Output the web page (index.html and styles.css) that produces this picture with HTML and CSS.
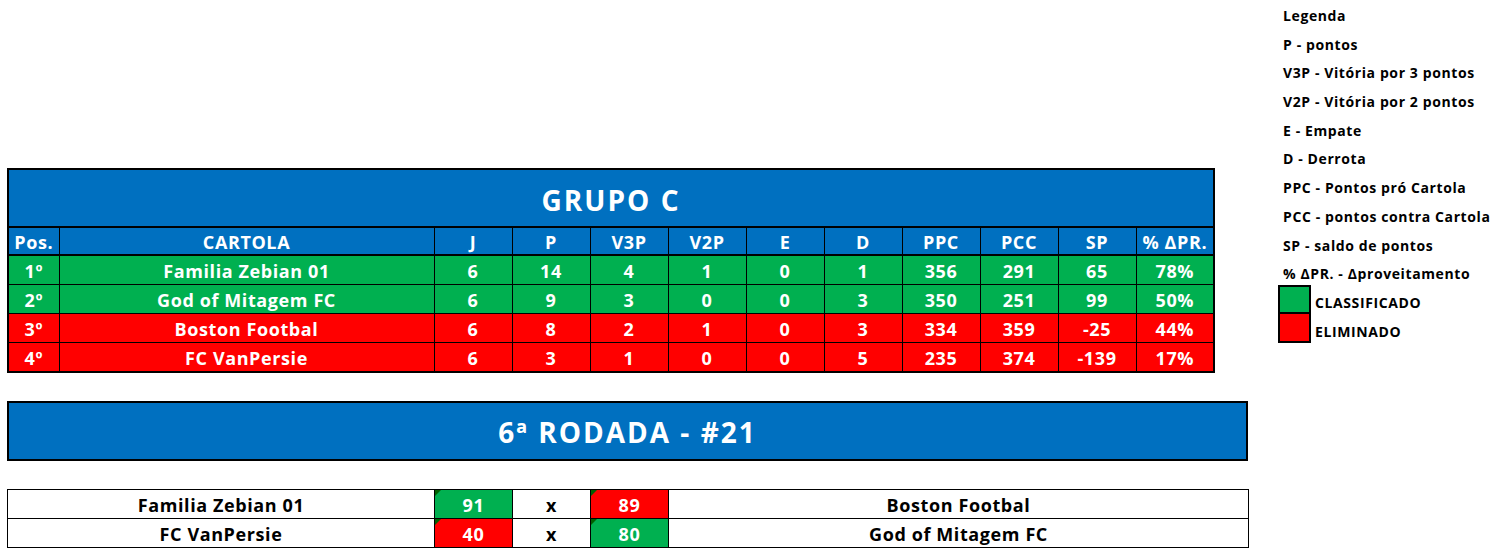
FILE: index.html
```html
<!DOCTYPE html>
<html lang="pt">
<head>
<meta charset="utf-8">
<title>Grupo C</title>
<link rel="stylesheet" href="styles.css">
</head>
<body>
<div class="page">
  <main class="main">
    <table class="standings">
      <colgroup>
        <col class="c-pos"><col class="c-name">
        <col class="c-num"><col class="c-num"><col class="c-num"><col class="c-num"><col class="c-num">
        <col class="c-num"><col class="c-num"><col class="c-num"><col class="c-num"><col class="c-num">
      </colgroup>
      <thead>
        <tr><th colspan="12" class="title">GRUPO C</th></tr>
        <tr class="head">
          <th>Pos.</th><th>CARTOLA</th><th>J</th><th>P</th><th>V3P</th><th>V2P</th><th>E</th><th>D</th><th>PPC</th><th>PCC</th><th>SP</th><th>% ΔPR.</th>
        </tr>
      </thead>
      <tbody>
        <tr class="win"><td>1º</td><td>Familia Zebian 01</td><td>6</td><td>14</td><td>4</td><td>1</td><td>0</td><td>1</td><td>356</td><td>291</td><td>65</td><td>78%</td></tr>
        <tr class="win"><td>2º</td><td>God of Mitagem FC</td><td>6</td><td>9</td><td>3</td><td>0</td><td>0</td><td>3</td><td>350</td><td>251</td><td>99</td><td>50%</td></tr>
        <tr class="lose"><td>3º</td><td>Boston Footbal</td><td>6</td><td>8</td><td>2</td><td>1</td><td>0</td><td>3</td><td>334</td><td>359</td><td>-25</td><td>44%</td></tr>
        <tr class="lose"><td>4º</td><td>FC VanPersie</td><td>6</td><td>3</td><td>1</td><td>0</td><td>0</td><td>5</td><td>235</td><td>374</td><td>-139</td><td>17%</td></tr>
      </tbody>
    </table>

    <div class="round">6ª RODADA - #21</div>

    <table class="matches">
      <colgroup>
        <col class="m-team1"><col class="m-score"><col class="m-x"><col class="m-score"><col class="m-team2">
      </colgroup>
      <tbody>
        <tr><td>Familia Zebian 01</td><td class="score win">91</td><td>x</td><td class="score lose">89</td><td>Boston Footbal</td></tr>
        <tr><td>FC VanPersie</td><td class="score lose">40</td><td>x</td><td class="score win">80</td><td>God of Mitagem FC</td></tr>
      </tbody>
    </table>
  </main>

  <aside class="legend">
    <div class="legend-row">Legenda</div>
    <div class="legend-row">P - pontos</div>
    <div class="legend-row">V3P - Vitória por 3 pontos</div>
    <div class="legend-row">V2P - Vitória por 2 pontos</div>
    <div class="legend-row">E - Empate</div>
    <div class="legend-row">D - Derrota</div>
    <div class="legend-row">PPC - Pontos pró Cartola</div>
    <div class="legend-row">PCC - pontos contra Cartola</div>
    <div class="legend-row">SP - saldo de pontos</div>
    <div class="legend-row">% ΔPR. - Δproveitamento</div>
    <div class="legend-row swatch-row"><span class="swatch swatch-win"></span><span class="swatch-label">CLASSIFICADO</span></div>
    <div class="legend-row swatch-row"><span class="swatch swatch-lose"></span><span class="swatch-label">ELIMINADO</span></div>
  </aside>
</div>
</body>
</html>
```

FILE: styles.css
```css
html, body {
  margin: 0;
  padding: 0;
  background: #ffffff;
}

body {
  font-family: "Open Sans", Lato, "DejaVu Sans", sans-serif;
  font-weight: 700;
  color: #000;
}

.page {
  display: flex;
  align-items: flex-start;
}

.main {
  width: 1241px;
  padding: 168px 0 0 7px;
  display: flex;
  flex-direction: column;
}

/* ---------- standings ---------- */
.standings {
  border-collapse: collapse;
  table-layout: fixed;
  width: 1208px;
  border: 2px solid #000;
  color: #fff;
  font-size: 18px;
  letter-spacing: 0.6px;
}

.c-pos { width: 51px; }
.c-name { width: 375px; }
.c-num { width: 78px; }

.standings th,
.standings td {
  border: 1px solid #000;
  text-align: center;
  padding: 3px 0 0 0;
  height: 25px;
  line-height: 25px;
  white-space: nowrap;
  overflow: hidden;
}

.standings .title {
  background: #0070c0;
  height: 52px;
  padding-top: 4px;
  line-height: 52px;
  font-size: 28px;
  letter-spacing: 2px;
  border-bottom: 2px solid #000;
}

.standings .head th {
  background: #0070c0;
  border-bottom: 2px solid #000;
  font-weight: 700;
  height: 23px;
  line-height: 23px;
}

.standings .win td { background: #00b050; }
.standings .lose td { background: #ff0000; }

/* ---------- round header ---------- */
.round {
  margin-top: 28px;
  width: 1237px;
  border: 2px solid #000;
  background: #0070c0;
  color: #fff;
  font-size: 28px;
  letter-spacing: 2px;
  line-height: 53px;
  height: 53px;
  text-align: center;
  padding-top: 3px;
}

/* ---------- matches ---------- */
.matches {
  margin-top: 28px;
  border-collapse: collapse;
  table-layout: fixed;
  width: 1241px;
  font-size: 18px;
  letter-spacing: 0.6px;
}

.m-team1 { width: 427px; }
.m-score { width: 78px; }
.m-x { width: 78px; }
.m-team2 { width: 580px; }

.matches td {
  border: 1px solid #000;
  height: 25px;
  line-height: 25px;
  padding: 3px 0 0 0;
  text-align: center;
  white-space: nowrap;
}

.matches .score {
  position: relative;
  color: #fff;
}

.matches .score::before {
  content: "";
  position: absolute;
  top: 0;
  left: 0;
  border-top: 6px solid #006100;
  border-right: 6px solid transparent;
}

.matches .score.win { background: #00b050; }
.matches .score.lose { background: #ff0000; }

/* ---------- legend ---------- */
.legend {
  margin-left: 30px;
  display: flex;
  flex-direction: column;
  font-size: 14px;
  letter-spacing: 0.6px;
}

.legend-row {
  height: 28.7px;
  display: flex;
  align-items: flex-end;
  padding-left: 5px;
  box-sizing: border-box;
  padding-bottom: 2px;
  white-space: nowrap;
}

.legend-row:first-child {
  height: 27px;
}

.swatch-row {
  padding-left: 0;
  padding-bottom: 0;
  align-items: stretch;
}

.swatch {
  width: 33px;
  box-sizing: border-box;
  border: 2px solid #000;
}

.swatch-row + .swatch-row .swatch {
  border-top: 0;
}

.swatch-win { background: #00b050; }
.swatch-lose { background: #ff0000; }

.swatch-label {
  display: flex;
  align-items: flex-end;
  padding: 0 0 2px 4px;
}
```
